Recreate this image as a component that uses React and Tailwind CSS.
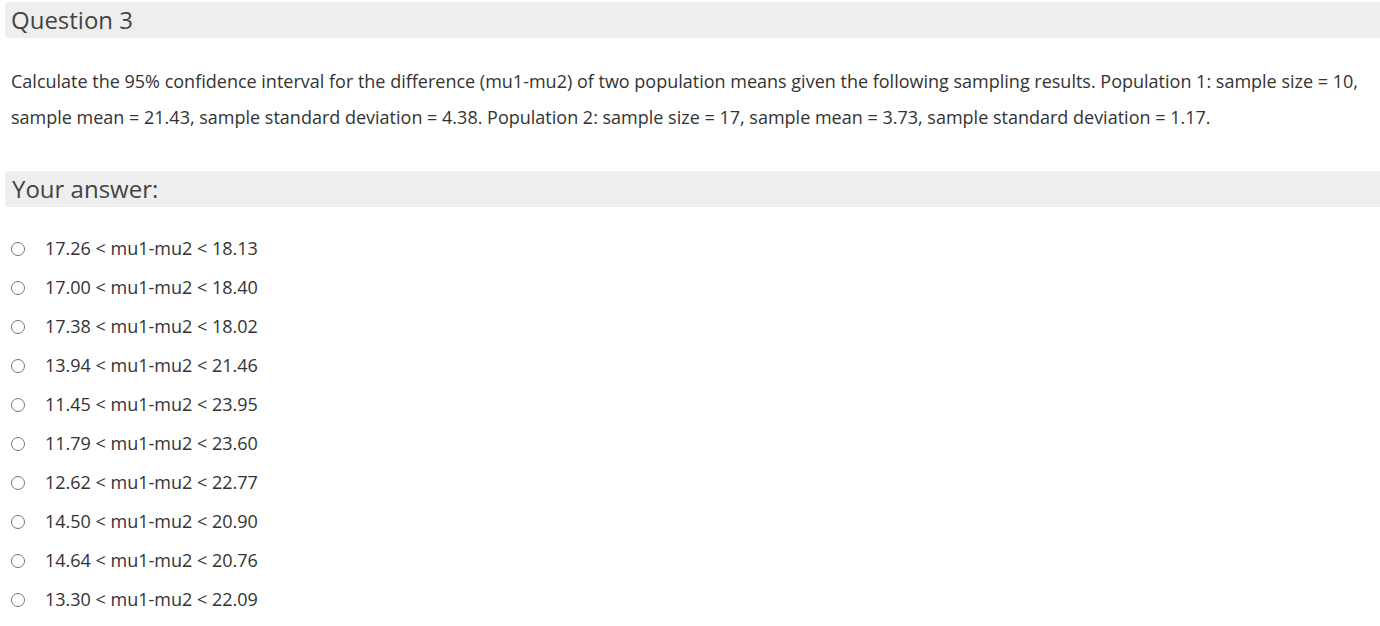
import React from "react";

const options = [
  "17.26 < mu1-mu2 < 18.13",
  "17.00 < mu1-mu2 < 18.40",
  "17.38 < mu1-mu2 < 18.02",
  "13.94 < mu1-mu2 < 21.46",
  "11.45 < mu1-mu2 < 23.95",
  "11.79 < mu1-mu2 < 23.60",
  "12.62 < mu1-mu2 < 22.77",
  "14.50 < mu1-mu2 < 20.90",
  "14.64 < mu1-mu2 < 20.76",
  "13.30 < mu1-mu2 < 22.09",
];

export default function App() {
  return (
    <div className="h-[626px] overflow-hidden bg-white text-[#333] font-['Open_Sans',sans-serif]">
      <div className="pt-[2px] pl-[5px]">
        <h2 className="h-[36px] bg-[#eeeeee] rounded-l-[4px] pl-[6px] text-[24px] leading-[36px] text-[#444]">
          Question 3
        </h2>
      </div>
      <p className="pl-[11px] pr-4 pt-[25px] text-[18px] leading-[36px]">
        Calculate the 95% confidence interval for the difference (mu1-mu2) of two population means given the following sampling results. Population 1: sample size = 10, sample mean = 21.43, sample standard deviation = 4.38. Population 2: sample size = 17, sample mean = 3.73, sample standard deviation = 1.17.
      </p>
      <div className="pt-[36px] pl-[5px]">
        <h3 className="h-[36px] bg-[#eeeeee] rounded-l-[4px] pl-[7px] text-[24px] leading-[36px] text-[#444]">
          Your answer:
        </h3>
      </div>
      <ul className="pt-[22px]">
        {options.map((o) => (
          <li key={o} className="flex items-center h-[39px]">
            <span className="ml-[11px] w-[14px] h-[14px] rounded-full border border-[#767676] bg-white" />
            <span className="ml-[20px] text-[18px]">{o}</span>
          </li>
        ))}
      </ul>
      <div className="pl-[20px] pt-[3px] text-[18px] text-[#1a73b8]">Clear selection</div>
    </div>
  );
}
